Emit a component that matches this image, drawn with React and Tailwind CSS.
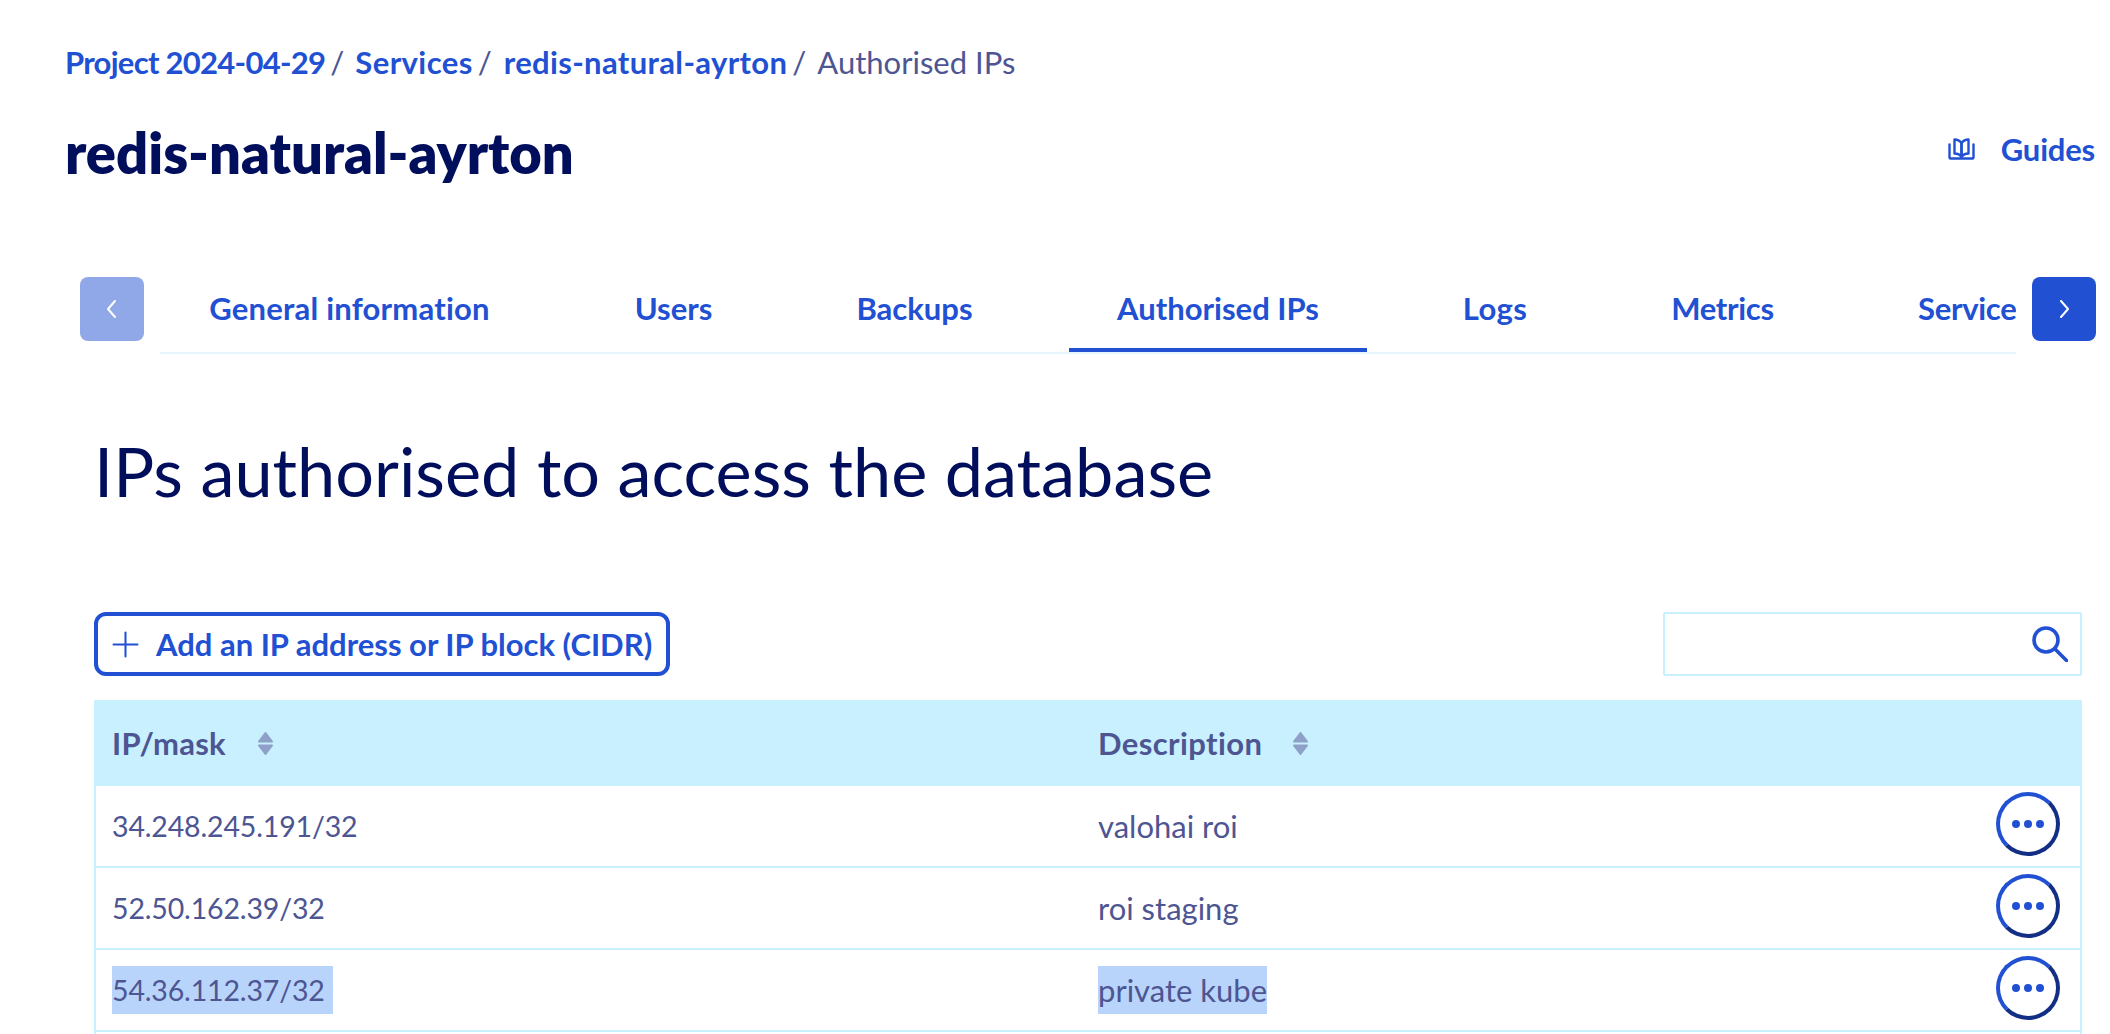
import React from 'react';
import { Plus } from 'lucide-react';

const tabs = [
    { label: 'General information', width: 'w-[377px]', text: 'tracking-[0.2px]' },
    { label: 'Users', width: 'w-[173px]' },
    { label: 'Backups', width: 'w-[211px]' },
    { label: 'Authorised IPs', width: 'w-[298px]', active: true },
    { label: 'Logs', width: 'w-[158px]', text: 'tracking-[0.4px]' },
    { label: 'Metrics', width: 'w-[199px]', text: 'tracking-[-0.3px]' },
    { label: 'Service', width: 'w-[146px]', text: 'pl-[47px] tracking-[-0.3px]' },
];

const rows = [
    { ip: '34.248.245.191/32', description: 'valohai roi' },
    { ip: '52.50.162.39/32', description: 'roi staging' },
    { ip: '54.36.112.37/32', description: 'private kube', selected: true },
];

const BookIcon = () => (
    <svg className="w-[27px] h-[22px]" viewBox="0 0 27 22" fill="none" stroke="currentColor" strokeWidth="2.4" strokeLinejoin="round" strokeLinecap="round">
        <path d="M1.5 6.5V19.5a1 1 0 0 0 1 1H24.5a1 1 0 0 0 1-1V6.5" />
        <path d="M6.5 1.5V15.5C9 15.5 12 16.5 13.5 19V5C12 3 9 1.5 6.5 1.5Z" />
        <path d="M20.5 1.5V15.5C18 15.5 15 16.5 13.5 19V5C15 3 18 1.5 20.5 1.5Z" />
    </svg>
);

const Chevron = ({ dir }) => (
    <svg className="w-[12px] h-[18px]" viewBox="0 0 12 18" fill="none" stroke="white" strokeWidth="2" strokeLinecap="round" strokeLinejoin="round">
        <path d={dir === 'left' ? 'M9 1L2 9L9 17' : 'M3 1L10 9L3 17'} />
    </svg>
);

const SortIcon = () => (
    <svg className="w-[15px] h-[23px]" viewBox="0 0 15 23" fill="#8fa0c8" stroke="#8fa0c8" strokeWidth="2" strokeLinejoin="round">
        <path d="M7.5 1L14 9.5H1Z" />
        <path d="M1 13.5H14L7.5 22Z" />
    </svg>
);

const MoreButton = () => (
    <button className="w-16 h-16 rounded-full border-4 border-t-[#2150d3] border-l-[#2150d3] border-r-[#122f85] border-b-[#122f85] flex items-center justify-center gap-1 bg-white">
        <span className="w-2 h-2 rounded-full bg-[#2150d3]"></span>
        <span className="w-2 h-2 rounded-full bg-[#2150d3]"></span>
        <span className="w-2 h-2 rounded-full bg-[#2150d3]"></span>
    </button>
);

const App = () => {
    return (
        <div className="w-full h-[1034px] overflow-hidden bg-white font-[Lato,sans-serif] text-[31px] leading-[48px] text-[#4d5592]">
            <nav className="flex pl-[65px] pt-[38px]">
                <a className="font-bold tracking-[-0.72px] text-[#2150d3]">Project 2024-04-29</a>
                <span className="ml-[5px]">/</span>
                <a className="ml-[11px] font-bold tracking-[0.4px] text-[#2150d3]">Services</a>
                <span className="ml-[5px]">/</span>
                <a className="ml-[12px] font-bold tracking-[0.35px] text-[#2150d3]">redis-natural-ayrton</a>
                <span className="ml-[5px]">/</span>
                <span className="ml-[11px]">Authorised IPs</span>
            </nav>

            <div className="flex justify-between items-start pl-[65px] pr-[15px] mt-[35px]">
                <h1 className="text-[56px] leading-[64px] font-extrabold text-[#000e5c]">redis-natural-ayrton</h1>
                <a className="flex items-center gap-[26px] font-bold tracking-[-0.2px] text-[#2150d3] mt-[4px]">
                    <BookIcon />
                    <span>Guides</span>
                </a>
            </div>

            <div className="flex gap-4 items-start pl-[80px] pr-[14px] mt-[92px]">
                <button className="w-16 h-16 shrink-0 rounded-lg bg-[#91a8e8] flex items-center justify-center">
                    <Chevron dir="left" />
                </button>
                <div className="flex-1 min-w-0 h-[77px] overflow-hidden border-b-2 border-[#e6f5fc]">
                    <ul className="flex gap-[49px] pl-px">
                        {tabs.map((tab) => (
                            <li
                                key={tab.label}
                                className={`${tab.width} ${tab.text || ''} shrink-0 h-[75px] pt-[7px] font-bold text-[#2150d3] whitespace-nowrap ${tab.label === 'Service' ? '' : 'text-center'} ${tab.active ? 'border-b-4 border-[#2150d3]' : ''}`}
                            >
                                {tab.label}
                            </li>
                        ))}
                    </ul>
                </div>
                <button className="w-16 h-16 shrink-0 rounded-lg bg-[#2150d3] flex items-center justify-center">
                    <Chevron dir="right" />
                </button>
            </div>

            <div className="ml-[94px] w-[1988px] mt-[75px]">
                <h2 className="text-[68.4px] leading-[84px] font-normal text-[#000e5c]">IPs authorised to access the database</h2>

                <div className="flex justify-between mt-[99px]">
                    <button className="h-16 w-[576px] flex items-center pl-[7px] rounded-xl border-4 border-[#2150d3] font-bold text-[#2150d3] whitespace-nowrap">
                        <Plus className="w-[41px] h-[41px] mr-[10px]" strokeWidth={1.2} />
                        Add an IP address or IP block (CIDR)
                    </button>
                    <div className="w-[419px] h-16 flex items-center justify-end pr-[12px] rounded-xs border-2 border-[#c8f0ff]">
                        <svg className="w-9 h-9" viewBox="0 0 36 36" fill="none" stroke="#2150d3" strokeWidth="3.6" strokeLinecap="round">
                            <circle cx="14" cy="14" r="12" />
                            <path d="M23 23L34.5 34.5" />
                        </svg>
                    </div>
                </div>

                <table className="w-full table-fixed border-separate border-spacing-0 mt-6">
                    <thead>
                        <tr className="bg-[#c8f0ff]">
                            <th className="w-[986px] h-[86px] pl-[18px] text-left font-bold tracking-[0.2px]">
                                <span className="flex items-center gap-[32px]">IP/mask <SortIcon /></span>
                            </th>
                            <th className="w-[800px] pl-[18px] text-left font-bold tracking-[0.4px]">
                                <span className="flex items-center gap-[31px]">Description <SortIcon /></span>
                            </th>
                            <th></th>
                        </tr>
                    </thead>
                    <tbody>
                        {rows.map((row) => (
                            <tr key={row.ip}>
                                <td className="h-[82px] pl-[16px] text-[28.5px] tracking-[-0.15px] border-l-2 border-b-2 border-[#c8f0ff]">
                                    <span className={row.selected ? 'inline-block pr-[8px] bg-[#b8d4fa]' : 'inline-block'}>{row.ip}</span>
                                </td>
                                <td className="pl-[18px] border-b-2 border-[#c8f0ff]">
                                    <span className={row.selected ? 'inline-block bg-[#b8d4fa]' : 'inline-block'}>{row.description}</span>
                                </td>
                                <td className="align-top pt-[6px] pr-[20px] border-r-2 border-b-2 border-[#c8f0ff]">
                                    <div className="flex justify-end">
                                        <MoreButton />
                                    </div>
                                </td>
                            </tr>
                        ))}
                        <tr>
                            <td className="h-[82px] border-l-2 border-[#c8f0ff]"></td>
                            <td></td>
                            <td className="border-r-2 border-[#c8f0ff]"></td>
                        </tr>
                    </tbody>
                </table>
            </div>
        </div>
    );
};

export default App;
